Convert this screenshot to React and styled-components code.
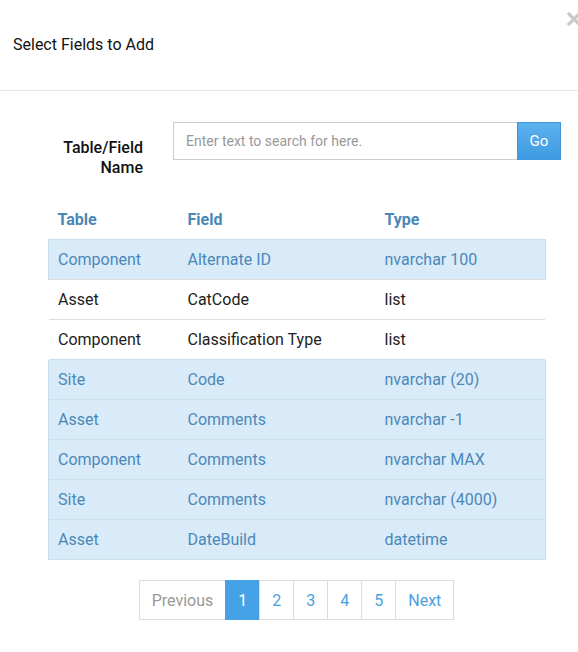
import React from 'react';
import styled, { createGlobalStyle } from 'styled-components';

const GlobalStyle = createGlobalStyle`
  body {
    margin: 0;
    background: #fff;
    font-family: Roboto, "Liberation Sans", sans-serif;
    color: #222;
  }
`;

const fields = [
  { table: 'Component', field: 'Alternate ID', type: 'nvarchar 100', selected: true },
  { table: 'Asset', field: 'CatCode', type: 'list' },
  { table: 'Component', field: 'Classification Type', type: 'list' },
  { table: 'Site', field: 'Code', type: 'nvarchar (20)', selected: true },
  { table: 'Asset', field: 'Comments', type: 'nvarchar -1', selected: true },
  { table: 'Component', field: 'Comments', type: 'nvarchar MAX', selected: true },
  { table: 'Site', field: 'Comments', type: 'nvarchar (4000)', selected: true },
  { table: 'Asset', field: 'DateBuild', type: 'datetime', selected: true },
];

const pages = ['Previous', '1', '2', '3', '4', '5', 'Next'];

function App() {
  return (
    <>
      <GlobalStyle />
      <Modal>
        <Header>
          <Title>Select Fields to Add</Title>
          <Close aria-label="Close">
            <svg width="14" height="14" viewBox="0 0 14 14">
              <path d="M2 2 L12 12 M12 2 L2 12" stroke="#c8c8c8" strokeWidth="3.2" strokeLinecap="square" />
            </svg>
          </Close>
        </Header>
        <Body>
          <SearchRow>
            <Label>Table/Field<br />Name</Label>
            <InputGroup>
              <SearchInput placeholder="Enter text to search for here." />
              <GoButton>Go</GoButton>
            </InputGroup>
          </SearchRow>
          <Table>
            <thead>
              <tr>
                <Th>Table</Th>
                <Th>Field</Th>
                <Th>Type</Th>
              </tr>
            </thead>
            <tbody>
              {fields.map((f, i) => (
                <Row key={i} $selected={f.selected}>
                  <Td>{f.table}</Td>
                  <Td>{f.field}</Td>
                  <Td>{f.type}</Td>
                </Row>
              ))}
            </tbody>
          </Table>
          <Pager>
            {pages.map((p) => (
              <PageItem key={p} $active={p === '1'} $disabled={p === 'Previous'} $wide={p.length > 1}>
                {p}
              </PageItem>
            ))}
          </Pager>
        </Body>
      </Modal>
    </>
  );
}

const Modal = styled.div`
  width: 578px;
  height: 652px;
  background: #fff;
  overflow: hidden;
`;

const Header = styled.div`
  position: relative;
  height: 90px;
  border-bottom: 1px solid #e5e5e5;
  display: flex;
  align-items: center;
  padding-left: 13px;
`;

const Title = styled.h4`
  margin: 0 0 2px;
  font-size: 16px;
  font-weight: 400;
  color: #111;
`;

const Close = styled.span`
  position: absolute;
  top: 12px;
  right: -3px;
  display: flex;
`;

const Body = styled.div`
  padding: 31px 17px 0 48px;
`;

const SearchRow = styled.div`
  display: flex;
  align-items: flex-start;
  gap: 30px;
`;

const Label = styled.div`
  width: 95px;
  text-align: right;
  font-size: 16px;
  font-weight: 500;
  line-height: 20px;
  color: #111;
  margin-top: 16px;
`;

const InputGroup = styled.div`
  display: flex;
  flex: 1;
  height: 38px;
`;

const SearchInput = styled.input`
  flex: 1;
  min-width: 0;
  border: 1px solid #ccc;
  border-right: none;
  padding: 0 12px;
  font-family: Roboto, "Liberation Sans", sans-serif;
  font-size: 14px;
  color: #333;
  outline: none;
  &::placeholder {
    color: #999;
  }
`;

const GoButton = styled.button`
  width: 44px;
  border: 1px solid #3d97dc;
  background: linear-gradient(#5cb0ee, #3f9be2);
  color: #fff;
  font-family: Roboto, "Liberation Sans", sans-serif;
  font-size: 15px;
  padding: 0;
`;

const Table = styled.table`
  width: 498px;
  margin-top: 21px;
  border-collapse: collapse;
  font-size: 16px;
`;

const Th = styled.th`
  text-align: left;
  font-weight: 700;
  color: #4a87b6;
  height: 40px;
  padding: 0 9px;
  vertical-align: middle;
  &:nth-child(1) { width: 112px; }
  &:nth-child(2) { width: 179px; }
`;

const Row = styled.tr`
  height: 40px;
  background: ${(p) => (p.$selected ? '#d9ebf8' : '#fff')};
  color: ${(p) => (p.$selected ? '#4b88b8' : '#222')};
  border-top: 1px solid ${(p) => (p.$selected ? '#c8dfef' : '#dddddd')};
  border-left: 1px solid ${(p) => (p.$selected ? '#c8dfef' : '#fff')};
  border-right: 1px solid ${(p) => (p.$selected ? '#c8dfef' : '#fff')};
  &:last-child {
    border-bottom: 1px solid #c8dfef;
  }
`;

const Td = styled.td`
  padding: 0 9px;
  vertical-align: middle;
`;

const Pager = styled.div`
  display: flex;
  justify-content: center;
  width: 498px;
  margin-top: 20px;
`;

const PageItem = styled.div`
  height: 38px;
  min-width: ${(p) => (p.$wide ? 'auto' : '33px')};
  padding: 0 ${(p) => (p.$wide ? '12px' : '0')};
  display: flex;
  align-items: center;
  justify-content: center;
  border: 1px solid ${(p) => (p.$active ? '#46a2e6' : '#ddd')};
  margin-left: -1px;
  font-size: 16px;
  background: ${(p) => (p.$active ? '#46a2e6' : '#fff')};
  color: ${(p) => (p.$active ? '#fff' : p.$disabled ? '#999' : '#4a9fe0')};
`;

export default App;
